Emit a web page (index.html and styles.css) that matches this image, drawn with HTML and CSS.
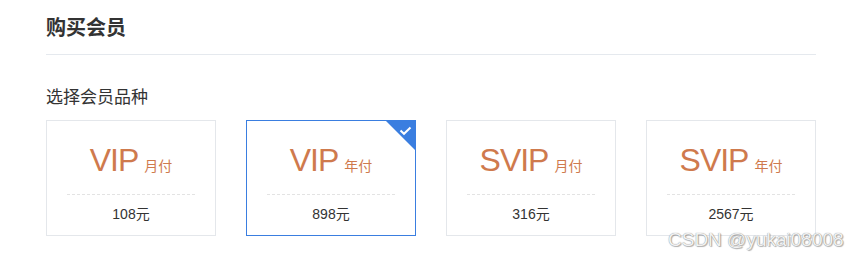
FILE: index.html
```html
<!DOCTYPE html>
<html lang="zh-CN">
  <head>
    <meta charset="UTF-8" />
    <meta name="viewport" content="width=device-width, initial-scale=1.0" />
    <title>购买会员</title>
    <link rel="stylesheet" href="styles.css">
  </head>
  <body>
    <div class="page">
      <h2 class="title">购买会员</h2>
      <div class="label">选择会员品种</div>
      <div class="cards">
        <div class="card">
          <div class="name">VIP<span class="period">月付</span></div>
          <div class="price">108元</div>
        </div>
        <div class="card active">
          <div class="name">VIP<span class="period">年付</span></div>
          <div class="price">898元</div>
          <svg class="corner" width="31" height="31" viewBox="0 0 31 31">
            <polygon points="0,0 31,0 31,31" fill="#3a7ee0" />
            <polyline points="15.5,10.5 19,13.8 25.5,7.5" fill="none" stroke="#fff" stroke-width="2" />
          </svg>
        </div>
        <div class="card">
          <div class="name">SVIP<span class="period">月付</span></div>
          <div class="price">316元</div>
        </div>
        <div class="card">
          <div class="name">SVIP<span class="period">年付</span></div>
          <div class="price">2567元</div>
        </div>
      </div>
    </div>
    <div class="watermark">CSDN @yukai08008</div>
  </body>
</html>
```

FILE: styles.css
```css
body {
  margin: 0;
  background: #fff;
  font-family: "Liberation Sans", "Noto Sans CJK SC", sans-serif;
  color: #333;
}

.page {
  width: 770px;
  padding: 14px 0 0 46px;
}

.title {
  margin: 0;
  padding-bottom: 12px;
  font-size: 20px;
  line-height: 28px;
  font-weight: bold;
  border-bottom: 1px solid #e5e9ee;
}

.label {
  margin-top: 31px;
  font-size: 17px;
  line-height: 24px;
}

.cards {
  display: flex;
  gap: 30px;
  margin-top: 10px;
}

.card {
  position: relative;
  width: 168px;
  height: 114px;
  border: 1px solid #e4e7eb;
}

.card.active {
  border-color: #3a7ee0;
}

.name {
  margin: 19px 20px 0;
  padding-bottom: 14px;
  border-bottom: 1px dashed #e3e3e3;
  text-align: center;
  font-size: 32px;
  line-height: 40px;
  letter-spacing: -1px;
  color: #cf7a4d;
}

.period {
  margin-left: 6px;
  font-size: 14px;
  line-height: 1;
  letter-spacing: 0;
}

.price {
  padding-top: 9px;
  text-align: center;
  font-size: 14px;
  line-height: 20px;
}

.corner {
  position: absolute;
  top: -1px;
  right: -1px;
}

.watermark {
  position: absolute;
  left: 668px;
  top: 228px;
  font-size: 19px;
  line-height: 24px;
  color: #f2f2f2;
  text-shadow: 0 0 1px #777, 1px 1px 1px rgba(0, 0, 0, 0.3);
}
```
